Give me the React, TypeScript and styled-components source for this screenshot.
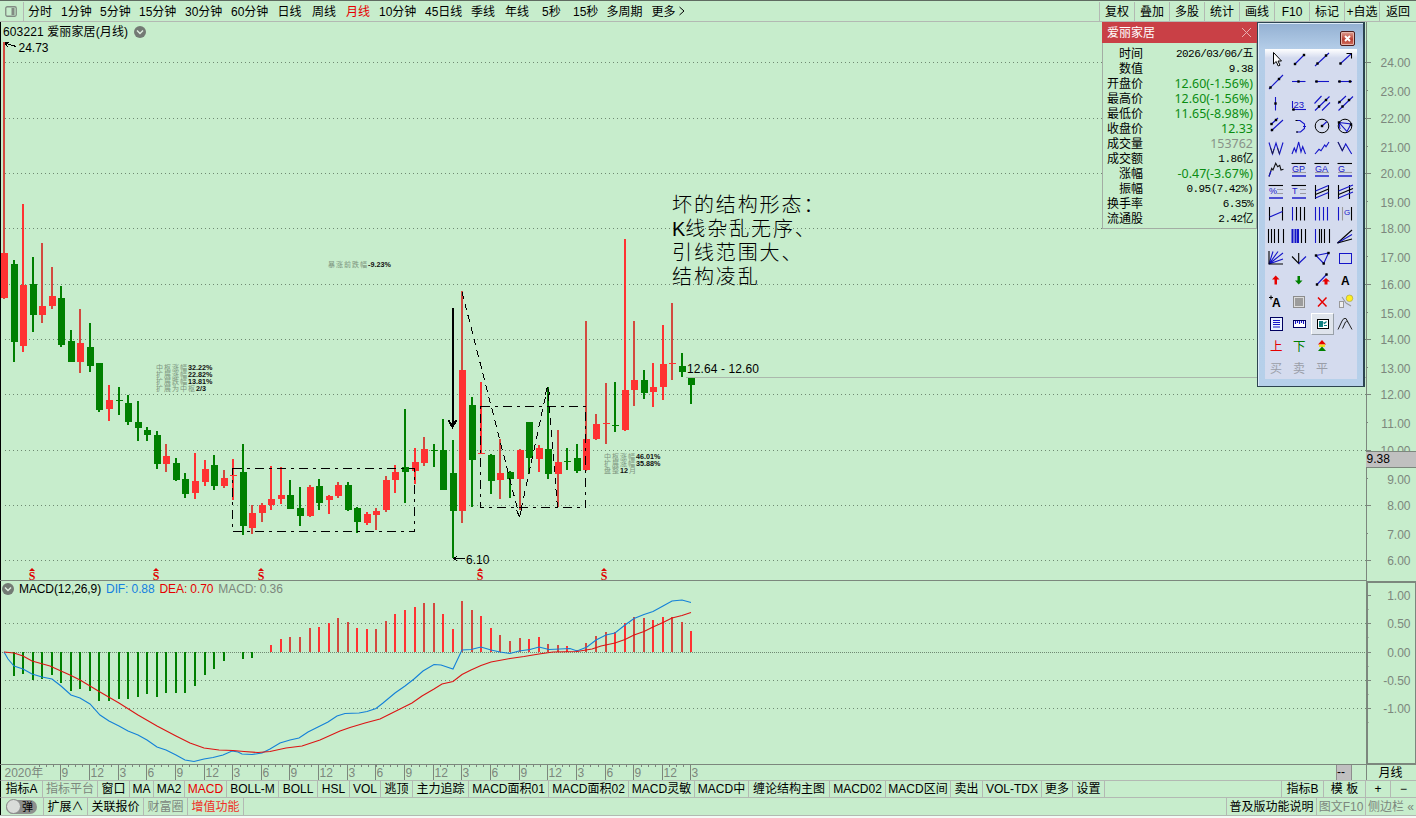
import React from "react";
import styled, { createGlobalStyle } from "styled-components";

const GlobalStyle = createGlobalStyle`
    body {
        margin: 0;
        background: #c7edcc;
        overflow: hidden;
    }
    * {
        box-sizing: border-box;
    }
`

const SANS = `"Liberation Sans", "Noto Sans CJK SC", sans-serif`;
const RED = "#ff3232";
const GREEN = "#008000";
const GRAY = "#7c877d";

const Screen = styled.div`
    position: relative;
    display: flex;
    flex-direction: column;
    width: 1416px;
    height: 818px;
    background: #c7edcc;
    color: #000;
    font: 12px/16px ${SANS};
    white-space: nowrap;
`

const TopBar = styled.div`
    display: flex;
    height: 22px;
    padding-top: 1px;
    border-top: 1px solid #5f6b61;
    border-bottom: 1px solid #b3b9b3;
`

const PanelToggle = styled.div`
    display: flex;
    align-items: center;
    width: 24px;
    padding-left: 5px;
    border-right: 1px solid #b3b9b3;
    margin-right: 4px;
`

const Period = styled.div<{ w: number, active?: boolean }>`
    width: ${p => p.w}px;
    line-height: 20px;
    color: ${p => p.active ? "#e60000" : "#000"};
`

const TopButtons = styled.div`
    display: flex;
    margin-left: auto;
`

const TopButton = styled.div<{ w?: number }>`
    width: ${p => p.w || 35}px;
    border-left: 1px solid #b3b9b3;
    text-align: center;
    line-height: 20px;
`

const Body = styled.div`
    display: grid;
    grid-template-columns: 1366px 50px;
    grid-template-rows: 559px 184px 15px;
    height: 758px;
`

const Pane = styled.div`
    display: grid;
    border-left: 1px solid #000;
    svg, header {
        grid-area: 1 / 1;
    }
    svg {
        display: block;
        margin-left: -1px;
    }
`

const PaneTitle = styled.header<{ macd?: boolean }>`
    display: flex;
    align-items: center;
    align-self: start;
    gap: ${p => p.macd ? 5 : 6}px;
    height: ${p => p.macd ? 16 : 19}px;
    padding-left: ${p => p.macd ? 1 : 2}px;
    letter-spacing: ${p => p.macd ? -0.1 : 0.12}px;
    z-index: 1;
`

const Legend = styled.span<{ color?: string }>`
    color: ${p => p.color || "#000"};
`

const PriceAxis = styled.div`
    border-left: 1px solid ${GRAY};
    svg {
        display: block;
        margin-left: -1px;
    }
`

const MacdAxis = styled.div`
    border: 2px solid ${GRAY};
    border-left-width: 2px;
    border-right-width: 1px;
    svg {
        display: block;
        margin: -2px;
    }
`

const TimeAxis = styled.div`
    border-left: 1px solid #000;
    svg {
        display: block;
        margin-left: -1px;
    }
`

const PeriodName = styled.div`
    border-left: 1px solid ${GRAY};
    text-align: center;
    line-height: 16px;
    padding-right: 2px;
`

const BottomRow = styled.div<{ h: number }>`
    display: flex;
    height: ${p => p.h}px;
    border-top: 1px solid #b3b9b3;
    border-left: 1px solid #000;
    line-height: ${p => p.h}px;
`

const Tab = styled.div<{ w: number, tone?: string, push?: boolean, last?: boolean }>`
    width: ${p => p.w}px;
    margin-left: ${p => p.push ? "auto" : 0};
    border-left: ${p => p.push ? "1px solid #b3b9b3" : 0};
    border-right: ${p => p.last ? 0 : "1px solid #b3b9b3"};
    text-align: center;
    color: ${p => p.tone || "#000"};
`

const SwitchCell = styled.div`
    display: flex;
    align-items: center;
    width: 43px;
    padding-left: 5px;
    border-right: 1px solid #b3b9b3;
`

const Switch = styled.div`
    display: flex;
    align-items: center;
    width: 31px;
    height: 14px;
    border-radius: 7px;
    background: #8d8f8d;
    font-size: 11px;
    gap: 1px;
    &::before {
        content: "";
        width: 13px;
        height: 13px;
        border-radius: 50%;
        border: 1px solid #888;
        background: #d9dcd9;
    }
`

const Footer = styled.div`
    height: 3px;
    border-top: 1px solid #b3b9b3;
    background: #f4fbf5;
`

/* floating windows */
const QuoteWindow = styled.div`
    position: absolute;
    left: 1102px;
    top: 22px;
    width: 155px;
    height: 207px;
    border: 1px solid #a3ada4;
    border-top: 0;
    background: #c7edcc;
`

const QuoteHeader = styled.div`
    display: flex;
    justify-content: space-between;
    align-items: center;
    height: 21px;
    margin: 0 -1px 3px;
    padding: 0 5px;
    background: #c94046;
    color: #fff;
`

const QuoteRow = styled.div`
    display: flex;
    justify-content: space-between;
    height: 15px;
    padding: 0 3px 0 3px;
`

const QuoteLabel = styled.span`
    width: 37px;
    text-align: right;
`

const QuoteValue = styled.span<{ tone?: string }>`
    color: ${p => p.tone || "#000"};
    font-family: ${p => p.tone ? `"Noto Sans", sans-serif` : `"Liberation Mono", "Noto Sans CJK SC", monospace`};
    font-size: ${p => p.tone ? 12.4 : 11}px;
    letter-spacing: ${p => p.tone ? 0.05 : -0.55}px;
`

const ToolWindow = styled.div`
    position: absolute;
    left: 1257px;
    top: 22px;
    width: 108px;
    height: 365px;
    border: 1px solid #2c4450;
    border-right-width: 2px;
    background: linear-gradient(#93b0d2, #b4cde8 26px, #b6d0ea);
    box-shadow: inset 1px 1px 0 #dcebf8;
`

const ToolTitle = styled.div`
    display: flex;
    justify-content: flex-end;
    height: 26px;
    padding: 8px 8px 0 0;
`

const CloseButton = styled.div`
    display: flex;
    align-items: center;
    justify-content: center;
    width: 15px;
    height: 15px;
    border: 1px solid #4e1c1c;
    border-radius: 2px;
    background: linear-gradient(#dda093, #c04a3c 50%, #b5382c 52%, #cf7060);
    box-shadow: inset 0 0 0 1px #e6b5ab;
`

const ToolGrid = styled.div`
    display: grid;
    grid-template-columns: repeat(4, 23px);
    grid-auto-rows: 22px;
    width: 92px;
    height: 330px;
    margin-left: 7px;
    background: linear-gradient(#fff, #d4dbee 9px);
`

const Tool = styled.div<{ pressed?: boolean }>`
    border: ${p => p.pressed ? "1px solid" : 0};
    border-color: #fff #98a0a8 #98a0a8 #fff;
    background: ${p => p.pressed ? "#dfe4ec" : "none"};
    svg {
        display: block;
        margin: ${p => p.pressed ? -1 : 0}px;
    }
`

const STEP = 9.548;
const wickX = (i: number) => Math.round(3 + STEP * i);
const wickRed = (x: number) => x % 2 ? "#d34a3f" : RED;

// up/down, high, open/close top, open/close bottom, low
type Candle = [string, number, number, number, number];
const candles: Candle[] = [
    ["r", 42, 253, 298, 299], ["g", 260, 264, 342, 362], ["r", 204, 285, 346, 352], ["g", 257, 284, 315, 332],
    ["r", 243, 306, 315, 323], ["r", 267, 296, 306, 309], ["g", 286, 298, 345, 347], ["g", 330, 341, 362, 362],
    ["r", 309, 343, 362, 373], ["g", 323, 347, 366, 372], ["g", 363, 363, 410, 412], ["r", 385, 400, 409, 421],
    ["g", 387, 400, 401, 415], ["g", 395, 403, 422, 425], ["g", 401, 422, 428, 441], ["g", 427, 430, 435, 441],
    ["g", 431, 435, 464, 469], ["r", 444, 456, 464, 472], ["g", 458, 463, 480, 481], ["g", 473, 479, 494, 498],
    ["r", 453, 481, 493, 499], ["r", 460, 469, 482, 486], ["g", 455, 465, 486, 490], ["r", 470, 478, 486, 488],
    ["r", 459, 475, 476, 500], ["g", 444, 472, 526, 535], ["r", 505, 513, 528, 534], ["r", 503, 505, 513, 522],
    ["r", 466, 499, 505, 510], ["r", 467, 495, 499, 504], ["g", 480, 495, 509, 509], ["g", 487, 508, 516, 526],
    ["r", 485, 487, 516, 517], ["g", 479, 486, 503, 510], ["r", 495, 496, 500, 514], ["r", 482, 485, 496, 498],
    ["g", 482, 485, 510, 511], ["g", 507, 508, 522, 533], ["r", 512, 514, 523, 525], ["r", 508, 511, 515, 530],
    ["r", 476, 480, 510, 512], ["r", 465, 472, 480, 493], ["g", 409, 467, 472, 503], ["r", 448, 462, 471, 484],
    ["r", 437, 449, 463, 466], ["g", 444, 450, 451, 467], ["g", 419, 450, 490, 490], ["g", 440, 473, 511, 558],
    ["r", 291, 370, 511, 523], ["g", 397, 405, 460, 507], ["r", 382, 453, 454, 454], ["g", 454, 455, 481, 494],
    ["r", 439, 473, 480, 499], ["g", 471, 472, 479, 498], ["r", 449, 450, 479, 510], ["g", 422, 422, 458, 474],
    ["r", 445, 448, 459, 472], ["g", 387, 449, 474, 479], ["r", 430, 462, 474, 507], ["g", 448, 461, 462, 470],
    ["g", 444, 458, 471, 473], ["r", 321, 439, 470, 471], ["r", 414, 424, 439, 440], ["r", 383, 423, 424, 444],
    ["g", 382, 425, 426, 432], ["r", 239, 390, 430, 431], ["r", 321, 380, 390, 406], ["g", 370, 380, 393, 399],
    ["r", 363, 387, 392, 407], ["r", 325, 364, 387, 400], ["r", 303, 363, 364, 380], ["g", 353, 366, 372, 377],
    ["g", 378, 378, 385, 404],
];

// bar ends, the zero line is at 652
const histogram = [
    652, 676, 674, 680, 679, 675, 683, 691, 689, 691, 701, 701, 699, 699, 697, 694, 697, 693, 693, 693, 686, 675,
    669, 661, 652, 659, 658, 652, 645, 639, 637, 637, 628, 627, 623, 618, 622, 628, 629, 629, 621, 614, 610, 607,
    603, 603, 614, 629, 601, 610, 616, 628, 635, 641, 638, 639, 637, 644, 645, 646, 650, 643, 636, 632, 632, 623,
    617, 618, 620, 617, 617, 622, 631,
];

const dif = "4,652 8,659 14,666 23,669 32,674 42,677 52,679 61,686 71,695 80,698 90,704 100,715 109,721 119,726 128,731 138,735 147,740 157,747 166,750 176,755 185,760 194,761.5 204,759 213,757.5 223,755 232,751 238,752 242,754 252,754.5 262,753 270,749 280,743 290,740 299,738 308,732 318,727 328,722 337,716 345,713.5 359,713 367,711.5 376,708.5 383,703 395,693 405,686 414,679 423,671 434,664.5 441,665 453,669 462,650 471,649.5 481,647 491,650 500,652 510,653.5 519,651 530,649.5 539,647 549,649.5 560,649 570,648.5 577,651 587,647 596,640 606,635 615,633 625,625 634,618.5 644,614.5 653,611.5 663,606 672,601 682,600 691,602.5";
const dea = "4,652 14,653 23,656 32,661 50,666 61,671 71,675.5 80,680 100,692 119,703 138,715 157,726 176,736 190,743 204,748 219,750 233,750.5 244,751.5 258,752.5 270,751.5 286,748 302,746 320,740 340,731 350,727.5 365,723 380,719 390,714 400,709 412,703 422,696 434,689 442,684 453,681.5 462,674.5 471,670 481,665.5 491,662 510,658.5 524,656.5 539,654 553,652 577,651.5 592,649 601,646 615,643 625,639.5 634,635 644,631.5 653,627 663,622.5 672,618 682,615.5 691,612.5";

const priceTicks: [string, number][] = [
    ["24.00", 62], ["23.00", 91], ["22.00", 118], ["21.00", 147], ["20.00", 173], ["19.00", 202], ["18.00", 228],
    ["17.00", 257], ["16.00", 284], ["15.00", 313], ["14.00", 339], ["13.00", 368], ["12.00", 394], ["11.00", 423],
    ["10.00", 450], ["9.00", 479], ["8.00", 505], ["7.00", 534], ["6.00", 560],
];
const macdTicks: [string, number][] = [["1.00", 595], ["0.50", 623], ["0.00", 652], ["-0.50", 680], ["-1.00", 708]];

const Chevron = () => <svg width="12" height="12" viewBox="0 0 12 12" style={{ margin: 0 }}>
    <circle cx="6" cy="6" r="6" fill="#737a74" />
    <path d="M3 4.5L6 7.5L9 4.5" fill="none" stroke="#dfeee1" strokeWidth="1.4" />
</svg>

interface INoteProps {
    x: number,
    y: number,
    label: string,
    value: string,
    after?: string
}
const Note = ({ x, y, label, value, after }: INoteProps) => {
    const end = x + label.length * 8;
    return <>
        <text x={x} y={y + 2.5} fontSize="7" letterSpacing="1" fill="#7d957f">{label}</text>
        <text x={end} y={y + 2.5} fontSize="7.2" fontWeight="bold" fill="#111">{value}</text>
        {after && <text x={end + 9} y={y + 2.5} fontSize="7" fill="#7d957f">{after}</text>}
    </>
}

const PriceChart = () => <svg width="1366" height="559" viewBox="0 22 1366 559" fontFamily={SANS} fontSize="12">
    <g stroke="#6f8a72" strokeDasharray="1 3" shapeRendering="crispEdges">
        {priceTicks.filter((t, i) => i % 2 === 0).map(([label, y]) => <path key={label} d={`M5 ${y + .5}H1366`} />)}
    </g>
    <path d="M686 377.5H1366" stroke="#abb8ac" shapeRendering="crispEdges" />
    <g shapeRendering="crispEdges">
        {candles.map(([side, high, top, bottom, low], i) => {
            const x = wickX(i);
            return <g key={i} fill={side === "r" ? RED : GREEN}>
                <rect x={x} y={high} width="2" height={low - high} fill={side === "r" ? wickRed(x) : GREEN} />
                <rect x={x - 2} y={top} width="7" height={bottom - top} />
            </g>
        })}
        <path d="M0 580.5H1366" stroke={GRAY} />
    </g>
    <g fill="none" stroke="#000" shapeRendering="crispEdges">
        <path d="M232.5 468.5H414.5V531.5H232.5Z" strokeDasharray="9 5 3 5" />
        <path d="M480.5 406.5H585.5V507.5H480.5Z" strokeDasharray="9 5 3 5" />
        <path d="M462 292L519.5 517L547.5 387L557.5 508" strokeDasharray="7 5" />
        <path d="M519.5 517l-3-7M519.5 517l2-8M547.5 387l-2.5 8M547.5 387l2.500 8" />
        <path d="M452.500 308V427M448.500 420L452.500 427L456.500 420" strokeWidth="2" />
        <path d="M465 558.500H454M457.500 555.500L454 558.500L457.500 561.500" />
        <path d="M16 46.500L5 43M9 42L5 43L7.500 47" />
    </g>
    <text x="18.5" y="52">24.73</text>
    <text x="466" y="564">6.10</text>
    <text x="687" y="373" textLength="72">12.64 - 12.60</text>
    <Note x={156} y={367.500} label="中枢涨幅" value="32.22%" />
    <Note x={156} y={374.500} label="扩展涨幅" value="22.82%" />
    <Note x={156} y={381.500} label="扩展跌幅" value="13.81%" />
    <Note x={156} y={388.500} label="扩展为中枢" value="2/3" />
    <Note x={328} y={264.500} label="暴涨前跌幅" value="-9.23%" />
    <Note x={604} y={456.500} label="中枢涨幅" value="46.01%" />
    <Note x={604} y={463.500} label="扩展涨幅" value="35.88%" />
    <Note x={604} y={470.500} label="盘整" value="12" after="月" />
    <g fontSize="20" letterSpacing="1.9" fontWeight="300">
        <text x="672" y="212">坏的结构形态：</text>
        <text x="672" y="236"><tspan letterSpacing="0" fontWeight="400">K</tspan>线杂乱无序、</text>
        <text x="672" y="260">引线范围大、</text>
        <text x="672" y="284">结构凌乱</text>
    </g>
    {[32, 156, 261, 480, 604].map(x => <g key={x} fill="#e00000">
        <path d={`M${x - 3} 571L${x} 568L${x + 3} 571Z`} />
        <text x={x} y="579.5" fontSize="12" fontWeight="bold" fontFamily="Liberation Serif" textAnchor="middle">S</text>
    </g>)}
</svg>

const MacdChart = () => <svg width="1366" height="184" viewBox="0 581 1366 184">
    <g stroke="#6f8a72" shapeRendering="crispEdges">
        {[623.5, 680.5, 708.5].map(y => <path key={y} d={`M5 ${y}H1366`} strokeDasharray="1 3" />)}
        <path d="M2 652.5H1366" strokeDasharray="1 1" />
        <path d="M0 764.5H1366" stroke={GRAY} />
    </g>
    <g shapeRendering="crispEdges">
        {histogram.map((end, i) => {
            const x = wickX(i);
            return end > 652 ? <rect key={i} x={x} y="652" width="2" height={end - 652} fill={GREEN} />
                : <rect key={i} x={x} y={end} width="2" height={652 - end} fill={wickRed(x)} />
        })}
    </g>
    <polyline points={dif} fill="none" stroke="#1480d8" strokeWidth="1.1" />
    <polyline points={dea} fill="none" stroke="#dc1414" strokeWidth="1.1" />
</svg>

const TimeScale = () => {
    const marks = Array.from({ length: 23 }, (_, k) => ({ x: wickX(6 + k * 3), label: ["9", "12", "3", "6"][k % 4] }));
    return <svg width="1366" height="15" viewBox="0 765 1366 15" fontFamily={SANS} fontSize="12" fill={GRAY}>
        <text x="4.5" y="777">2020年</text>
        <g stroke={GRAY} shapeRendering="crispEdges">
            {marks.map(({ x }) => <path key={x} d={`M${x + .5} 765V780`} />)}
            {Array.from({ length: 91 }, (_, k) => <path key={k} d={`M${Math.round(39 + k * STEP * .75) + .5} 765v2`} />)}
        </g>
        {marks.map(({ x, label }) => <text key={x} x={x + 1.5} y="777">{label}</text>)}
        <rect x="1336" y="765" width="16" height="15" fill="#c0c0c0" />
        <path d="M1336.5 765V780M1351.5 765V780" stroke="#8d8d8d" />
        <text x="1337" y="776" fill="#000">--</text>
    </svg>
}

const PriceScale = () => <svg width="50" height="559" viewBox="1366 22 50 559" fontFamily={SANS} fontSize="12" fill={GRAY}>
    {priceTicks.map(([label, y], i) => <g key={label}>
        <path d={i % 2 ? `M1366 ${y - .5}h2` : `M1366 ${y + .5}h5`} stroke={GRAY} />
        <text x="1410.500" y={y + 5} textAnchor="end">{label}</text>
    </g>)}
    <rect x="1366" y="451" width="50" height="17" fill="#c0c0c0" />
    <path d="M1366 451.500H1416M1366 467.500H1416" stroke={GRAY} />
    <text x="1366.500" y="463" fill="#000">9.38</text>
</svg>

const MacdScale = () => <svg width="50" height="184" viewBox="1366 581 50 184" fontFamily={SANS} fontSize="12" fill={GRAY}>
    {macdTicks.map(([label, y]) => <g key={label}>
        <path d={`M1366 ${y + .5}h5M1366 ${y + 14.5}h2.500`} stroke={GRAY} />
        <text x="1410.500" y={y + 5} textAnchor="end">{label}</text>
    </g>)}
</svg>

const BLUE = "#1414c8";
interface IStrokeProps {
    d: string,
    c?: string,
    w?: number
}
const Stroke = ({ d, c = BLUE, w = 1.1 }: IStrokeProps) => <path d={d} stroke={c} strokeWidth={w} fill="none" />
const Dots = ({ at }: { at: number[][] }) => <>{at.map(([x, y]) => <rect key={`${x},${y}`} x={x - 1.2} y={y - 1.2} width="2.4" height="2.4" fill="#000" />)}</>
const Letter = ({ x, y, s = 9, c = BLUE, bold, children }: { x: number, y: number, s?: number, c?: string, bold?: boolean, children: string }) =>
    <text x={x} y={y} fontSize={s} fill={c} fontWeight={bold ? "bold" : "normal"} fontFamily={SANS}>{children}</text>
const Ratio = ({ name, wide }: { name: string, wide?: boolean }) => <>
    <Stroke d="M3.500 4.500H18" c="#000" />
    <Letter x={4} y={12.5}>{name}</Letter>
    <Stroke d={wide ? "M4 13.500H18" : "M12 8.500H18M12 12.500H18"} c="#9a9aa2" />
    <Stroke d="M4 17H18" w={1.4} />
</>

const tools: React.ReactNode[] = [
    <path d="M8.500 3.500V15L11.200 12.500L13.200 17L15 16.200L13 12H16.500Z" fill="#fff" stroke="#000" />,
    <><Stroke d="M7 15L16 6" /><Dots at={[[7, 15], [16, 6]]} /></>,
    <><Stroke d="M4 17L18 4" /><Dots at={[[6.5, 14.5], [15, 6.5]]} /></>,
    <><Stroke d="M6 15L17 5" /><Stroke d="M12.500 4.500H17.500V9.500" c="#000" /><Dots at={[[6.5, 14.5]]} /></>,

    <><Stroke d="M4 18L18 4" /><Dots at={[[5.5, 16.5], [14, 8]]} /></>,
    <><Stroke d="M4 10.500H17.500" /><Dots at={[[10.5, 10.5]]} /></>,
    <><Stroke d="M4 10.500H18" /><Dots at={[[5.5, 10.5]]} /></>,
    <><Stroke d="M4 10.500H18" /><Dots at={[[5.5, 10.5], [16, 10.5]]} /></>,

    <><Stroke d="M10.500 4V17.500" /><Dots at={[[10.5, 10.5]]} /></>,
    <><Stroke d="M4.500 8V15" /><Letter x={5.5} y={15} s={9.5}>23</Letter><Stroke d="M4 16.500H18" /><Dots at={[[5.5, 16.5]]} /></>,
    <><Stroke d="M3.500 10.500L10.500 3M4 17.500L18.500 3.500M11 17.500L19 9.500" /><Dots at={[[8, 13.5], [15, 7]]} /></>,
    <><Stroke d="M4 10.500L12 3M4.500 17.500L19 3.500" /><Dots at={[[5.5, 9], [8.5, 13.5], [15, 7]]} /></>,

    <><Stroke d="M6 9.500L13 3M6 16L18 5" /><Dots at={[[6.5, 9], [11, 5], [7, 15]]} /></>,
    <><Stroke d="M8.500 5.500H12L16.500 9V13.500L12.500 17H8.500M15 11.500H18" /><path d="M7.500 5.500h2M8 17h2" stroke="#000" /></>,
    <><circle cx="11" cy="11" r="6.800" fill="none" stroke="#000" /><Stroke d="M11 11L16 6.500" /><Dots at={[[11, 11]]} /></>,
    <><circle cx="11" cy="11" r="6.800" fill="none" stroke="#000" /><Stroke d="M5 7.500L17 9L13 16.500ZM5 7.500L6 14" /><Dots at={[[5, 7.5], [17, 9.5]]} /></>,

    <><Stroke d="M4 5.500L7.500 17L11 6L14.500 17L18 5.500" /><Stroke d="M5.500 10.500L7.500 17L9 12M12.500 11L14.500 17" c="#222" w={.8} /></>,
    <Stroke d="M4 17L6.300 11L8 15L10.700 5L13 15L14.700 9.700L17.500 17" />,
    <Stroke d="M4 17L8 12.300L10 13.700L13.700 8L15 9.700L18 5" />,
    <><Stroke d="M4 5L8.300 13.700L11.700 7L17.700 17" /><Stroke d="M4 5L8.300 13.700L10 10" c="#222" w={.7} /></>,

    <><Stroke d="M4 17.500L6.700 9.300L8 11L10.700 4.300L12.700 7.700L14.700 6.300L16 11L18.500 10.300" c="#111" /><Stroke d="M4 17.500L6 12" /></>,
    <Ratio name="GP" wide />,
    <Ratio name="GA" wide />,
    <Ratio name="G" wide />,

    <Ratio name="%" />,
    <Ratio name="T" />,
    <><Stroke d="M4.500 4V18M17.500 4V18" c="#000" /><Stroke d="M4.500 10L17.500 4.500M4.500 17L17.500 11.500" /><Stroke d="M4.500 13.500L17.500 8" c="#000" /></>,
    <><Stroke d="M4.500 4V18M15.500 4V18" c="#000" /><Stroke d="M4.500 10L19 4M4.500 17L19 11" /><Stroke d="M4.500 13.500L19 7.500" c="#000" /></>,

    <><Stroke d="M4.500 4V17.500M17.500 4V17.500" c="#000" /><Stroke d="M4.500 14L17.500 8.500" /></>,
    <><Stroke d="M4.500 4V17.500" /><Stroke d="M8.500 4V17.500M12.500 4V17.500M16.500 4V17.500" c="#000" /></>,
    <Stroke d="M4.500 4V17.500M8.500 4V17.500M12.500 4V17.500M16.500 4V17.500" />,
    <><Stroke d="M4.500 4V17.500" /><Stroke d="M8.500 4V17.500" c="#999" /><Letter x={10} y={11.5} s={8}>G</Letter><Stroke d="M17.500 4V17.500" c="#000" /></>,

    <Stroke d="M3.500 4V18M6.500 4V18M9.500 4V18M13.500 4V18M18.500 4V18" c="#000" />,
    <><Stroke d="M4.500 4V18M7.500 4V18M10 4V18" w={2} /><Stroke d="M13.500 4V18M17.500 4V18" c="#000" /></>,
    <><Stroke d="M4.500 4V18" /><Stroke d="M8.500 4V18M10.500 4V18M13.500 4V18M18.500 4V18" c="#000" /></>,
    <><Stroke d="M3.500 18L18 5" c="#000" /><Stroke d="M3.500 18L18 9.500" /><Stroke d="M3.500 18L18 14" c="#000" /></>,

    <><Stroke d="M4 17L8 4.500M4 17L13 4.500M4 17L18 6M4 17L18 12" /><Stroke d="M4 4V17H18" c="#000" /></>,
    <><Stroke d="M4 9.500L10.700 16.500V6" c="#000" /><Stroke d="M10.700 16.500L18 9.500" /></>,
    <><Stroke d="M5 8.500L17.500 6L12.700 16.500Z" /><Dots at={[[5, 8.5], [17.5, 6], [12.7, 16.5]]} /></>,
    <rect x="5.500" y="6.500" width="12" height="10" fill="none" stroke={BLUE} />,

    <path d="M10.700 6.500L14.500 10.500H12V15.500H9.500V10.500H7Z" fill="#e60000" />,
    <path d="M10.700 15.500L14.500 11.500H12V7H9.500V11.500H7Z" fill="#008000" />,
    <><Stroke d="M5.500 16L16 5" /><Dots at={[[6, 15.5], [15.5, 5.5]]} /><path d="M15 9L19 12.500H16.500V15.500H13.500V12.500H11Z" fill="#e60000" /></>,
    <Letter x={7} y={15.8} s={12} c="#000" bold>A</Letter>,

    <><Letter x={7} y={16.3} s={12} c="#000" bold>A</Letter><Stroke d="M4 6.500H8M6 4.500V8.500" c="#000" /></>,
    <><rect x="5.500" y="5.500" width="11" height="11" fill="#dcdcdc" stroke="#8c8c8c" /><rect x="7" y="7" width="8" height="8" fill="#9c9c9c" /></>,
    <Stroke d="M7 6.500L15.500 15.500M15.500 6.500L7 15.500" c="#e60000" w={1.5} />,
    <><rect x="5.500" y="10.500" width="4" height="6" fill="#eee" stroke="#999" /><Stroke d="M8 6L12 12M12 12L17 15" c="#999" /><circle cx="15.500" cy="7.300" r="3.300" fill="#ffee20" stroke="#a09a40" strokeWidth=".6" /></>,

    <><rect x="5.500" y="4.500" width="12" height="13" fill="#e8f0ff" stroke="#000060" /><Stroke d="M8 7.500H15M8 9.500H15M8 11.500H15M8 14H15" /></>,
    <><rect x="5.500" y="7.500" width="12" height="7" fill="#fff" stroke="#000060" /><Stroke d="M7.500 8V11M9.500 8V10M11.500 8V11M13.500 8V10M15.500 8V11" /></>,
    <><rect x="6.500" y="6.500" width="11" height="9" fill="#fff" stroke="#000" /><rect x="8" y="8" width="4" height="6" fill="#108080" /><Stroke d="M12.500 9.500L13.500 10.500L15.500 8.500M13 12.500H16" c="#108080" /></>,
    <Stroke d="M4 16.500L8 8Q9.500 4.500 12 5.500L18 16.500M8.500 15.500L11.500 9Q12.500 7.500 14 9" c="#222" w={1} />,

    <Letter x={5} y={16} s={12.5} c="#e60000">上</Letter>,
    <Letter x={5} y={16} s={12.5} c="#008000">下</Letter>,
    <><path d="M11 5L15 9.500H7Z" fill="#e60000" /><rect x="8" y="9.500" width="6" height="2.500" fill="#f0e020" /><path d="M11 11.500L15 16H7Z" fill="#008000" /></>,
    null,

    <Letter x={5} y={15.5} s={12} c="#9a9ea8">买</Letter>,
    <Letter x={5} y={15.5} s={12} c="#9a9ea8">卖</Letter>,
    <Letter x={5} y={15.5} s={12} c="#9a9ea8">平</Letter>,
];

const periods: [string, number][] = [
    ["分时", 33], ["1分钟", 39], ["5分钟", 39], ["15分钟", 46], ["30分钟", 46], ["60分钟", 46.5], ["日线", 34.5],
    ["周线", 34], ["月线", 33], ["10分钟", 46], ["45日线", 46], ["季线", 34], ["年线", 37], ["5秒", 31],
    ["15秒", 33.5], ["多周期", 45], ["更多", 26.5],
];
const actions = ["复权", "叠加", "多股", "统计", "画线", "F10", "标记", "+自选"];

const quote: [string, string, string?][] = [
    ["时间", "2026/03/06/五"], ["数值", "9.38"], ["开盘价", "12.60(-1.56%)", "#0a8c12"],
    ["最高价", "12.60(-1.56%)", "#0a8c12"], ["最低价", "11.65(-8.98%)", "#0a8c12"], ["收盘价", "12.33", "#0a8c12"],
    ["成交量", "153762", "#889289"], ["成交额", "1.86亿"], ["涨幅", "-0.47(-3.67%)", "#0a8c12"],
    ["振幅", "0.95(7.42%)"], ["换手率", "6.35%"], ["流通股", "2.42亿"],
];

const tabs: [string, number][] = [
    ["指标A", 42], ["指标平台", 55], ["窗口", 32], ["MA", 24], ["MA2", 31], ["MACD", 42], ["BOLL-M", 52], ["BOLL", 39],
    ["HSL", 32], ["VOL", 31], ["逃顶", 32], ["主力追踪", 56], ["MACD面积01", 80], ["MACD面积02", 80], ["MACD灵敏", 66],
    ["MACD中", 54], ["缠论结构主图", 81], ["MACD02", 56], ["MACD区间", 65], ["卖出", 32], ["VOL-TDX", 59], ["更多", 31], ["设置", 32],
];

const tabTone = (name: string) => name === "MACD" ? "#e60000" : name === "指标平台" ? GRAY : undefined;

const App = () => {
    return <Screen>
        <GlobalStyle />
        <TopBar>
            <PanelToggle>
                <svg width="12" height="11" viewBox="0 0 12 11">
                    <rect x=".75" y=".75" width="10.500" height="9.500" rx="1.500" fill="none" stroke="#828b83" strokeWidth="1.300" />
                    <rect x="6.500" y="2" width="3" height="7" fill="#828b83" />
                </svg>
            </PanelToggle>
            {periods.map(([name, w]) => <Period key={name} w={w} active={name === "月线"}>{name}</Period>)}
            <svg width="8" height="19" viewBox="0 0 8 19"><path d="M1.500 5L6 9L1.500 13" fill="none" stroke="#000" /></svg>
            <TopButtons>
                {actions.map(name => <TopButton key={name}>{name}</TopButton>)}
                <TopButton w={37}>返回</TopButton>
            </TopButtons>
        </TopBar>
        <Body>
            <Pane>
                <PaneTitle><span>603221 爱丽家居(月线)</span><Chevron /></PaneTitle>
                <PriceChart />
            </Pane>
            <PriceAxis><PriceScale /></PriceAxis>
            <Pane>
                <PaneTitle macd>
                    <Chevron />
                    <Legend>MACD(12,26,9)</Legend>
                    <Legend color="#1480e0">DIF: 0.88</Legend>
                    <Legend color="#e60000">DEA: 0.70</Legend>
                    <Legend color={GRAY}>MACD: 0.36</Legend>
                </PaneTitle>
                <MacdChart />
            </Pane>
            <MacdAxis><MacdScale /></MacdAxis>
            <TimeAxis><TimeScale /></TimeAxis>
            <PeriodName>月线</PeriodName>
        </Body>
        <BottomRow h={17}>
            {tabs.map(([name, w]) => <Tab key={name} w={w} tone={tabTone(name)}>{name}</Tab>)}
            <Tab w={43} push>指标B</Tab>
            <Tab w={42}>模 板</Tab>
            <Tab w={25}>+</Tab>
            <Tab w={25} last>−</Tab>
        </BottomRow>
        <BottomRow h={18}>
            <SwitchCell><Switch>弹</Switch></SwitchCell>
            <Tab w={44}>扩展∧</Tab>
            <Tab w={56}>关联报价</Tab>
            <Tab w={44} tone={GRAY}>财富圈</Tab>
            <Tab w={56} tone="#f03028">增值功能</Tab>
            <Tab w={91} push>普及版功能说明</Tab>
            <Tab w={49} tone={GRAY}>图文F10</Tab>
            <Tab w={50} tone={GRAY} last>侧边栏 «</Tab>
        </BottomRow>
        <Footer />
        <QuoteWindow>
            <QuoteHeader>
                <span>爱丽家居</span>
                <svg width="11" height="11" viewBox="0 0 11 11"><path d="M1 1L10 10M10 1L1 10" stroke="#e8b0b0" /></svg>
            </QuoteHeader>
            {quote.map(([label, value, tone]) => <QuoteRow key={label}>
                <QuoteLabel>{label}</QuoteLabel>
                <QuoteValue tone={tone}>{value}</QuoteValue>
            </QuoteRow>)}
        </QuoteWindow>
        <ToolWindow>
            <ToolTitle>
                <CloseButton>
                    <svg width="7" height="7" viewBox="0 0 7 7"><path d="M1 1L6 6M6 1L1 6" stroke="#fff" strokeWidth="2" /></svg>
                </CloseButton>
            </ToolTitle>
            <ToolGrid>
                {tools.map((icon, i) => <Tool key={i} pressed={i === 50}>
                    <svg width="23" height="22" viewBox="0 0 23 22">{icon}</svg>
                </Tool>)}
            </ToolGrid>
        </ToolWindow>
    </Screen>
}

export default App;
